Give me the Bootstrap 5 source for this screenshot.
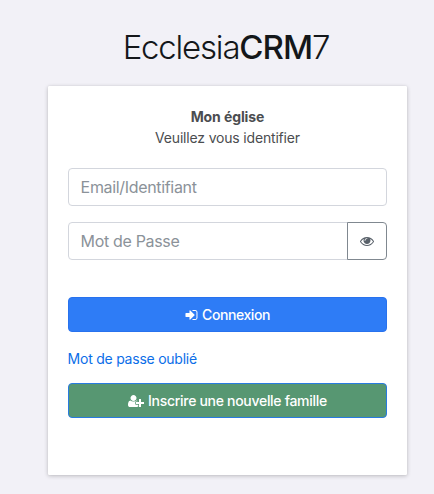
<!DOCTYPE html>
<html lang="fr">
<head>
<meta charset="utf-8">
<meta name="viewport" content="width=device-width, initial-scale=1">
<title>EcclesiaCRM7</title>
<link href="https://cdn.jsdelivr.net/npm/bootstrap@5.3.0/dist/css/bootstrap.min.css" rel="stylesheet">
<style>
body { background: #f2f1f7; font-family: Inter, "Liberation Sans", sans-serif; font-size: 14px; min-height: 494px; overflow: hidden; }
.login-box { width: 359.8px; margin-left: 47.6px; padding-top: 27px; }
.login-logo { font-size: 33px; line-height: 41px; font-weight: 300; color: #14171a; height: 59px; letter-spacing: -1.2px; padding-right: 3px; white-space: nowrap; }
.login-logo b { font-weight: 450; letter-spacing: -1px; }
.login-card { height: 389px; padding: 20px; border: 0; border-radius: 1px; box-shadow: 0 0 1px rgba(0,0,0,.13), 0 1px 4px rgba(0,0,0,.22); }
.login-msg { line-height: 21px; color: #4b4d50; margin-bottom: 20px; letter-spacing: -.18px; }
.login-msg b { font-weight: 650; letter-spacing: -.1px; }
.form-control { height: 38px; border-color: #d3d6dd; border-radius: 4px; font-size: 16px; letter-spacing: -.33px; }
.form-control::placeholder { color: #8b9299; opacity: 1; }
.eye-btn { width: 40px; padding: 0; border-color: #808890; border-radius: 4px; color: #59616a; }
.actions { padding-top: 37px; }
.wide-btn { height: 35px; padding: 0; font-size: 14px; font-weight: 500; letter-spacing: -.3px; color: #fff; border: 1px solid #2872ee; border-radius: 4px; background: #2e7cf6; }
.wide-btn.connect { letter-spacing: -.42px; }
.wide-btn.family { background: #579772; border-color: #287be0; }
.forgot { color: #0b6ee8; letter-spacing: -.24px; line-height: 21px; margin: 16px 0 14px; }
svg { fill: currentColor; flex: none; }
</style>
</head>
<body>
<main class="login-box">
  <h1 class="login-logo text-center mb-0">Ecclesia<b>CRM</b>7</h1>
  <div class="card login-card">
    <div class="login-msg text-center"><b>Mon église</b><br>Veuillez vous identifier</div>
    <form>
      <input type="text" class="form-control mb-3" placeholder="Email/Identifiant">
      <div class="input-group">
        <input type="password" class="form-control" placeholder="Mot de Passe">
        <button type="button" class="btn eye-btn d-flex align-items-center justify-content-center" aria-label="Afficher">
          <svg width="14" height="14" viewBox="0 0 1792 1792"><path d="M1664 960q-152-236-381-353 61 104 61 225 0 185-131.500 316.500t-316.500 131.500-316.500-131.500-131.500-316.500q0-121 61-225-229 117-381 353 133 205 333.500 326.500t434.500 121.500 434.500-121.500 333.500-326.500zm-720-384q0-20-14-34t-34-14q-125 0-214.500 89.500t-89.500 214.500q0 20 14 34t34 14 34-14 14-34q0-86 61-147t147-61q20 0 34-14t14-34zm848 384q0 34-20 69-140 230-376.500 368.500t-499.500 138.500-499.500-139-376.500-368q-20-35-20-69t20-69q140-229 376.500-368t499.500-139 499.500 139 376.500 368q20 35 20 69z"/></svg>
        </button>
      </div>
      <div class="actions d-flex flex-column">
        <button type="button" class="btn wide-btn connect w-100 d-flex align-items-center justify-content-center gap-1">
          <svg width="13" height="14" viewBox="100 0 1600 1792"><path d="M1312 896q0 26-19 45l-544 544q-19 19-45 19t-45-19-19-45v-288h-448q-26 0-45-19t-19-45v-384q0-26 19-45t45-19h448v-288q0-26 19-45t45-19 45 19l544 544q19 19 19 45zm352-352v704q0 119-84.500 203.500t-203.500 84.500h-320q-13 0-22.500-9.500t-9.500-22.500q0-4-1-20t-.5-26.500 3-23.500 10-19.500 20.500-6.500h320q66 0 113-47t47-113v-704q0-66-47-113t-113-47h-312l-11.500-1-11.500-3-8-5.500-7-9-2-13.500q0-4-1-20t-.5-26.500 3-23.500 10-19.500 20.500-6.500h320q119 0 203.500 84.500t84.500 203.500z"/></svg>
          <span>Connexion</span>
        </button>
        <a href="#" class="forgot text-decoration-none">Mot de passe oublié</a>
        <button type="button" class="btn wide-btn family w-100 d-flex align-items-center justify-content-center gap-1">
          <svg width="16" height="14" viewBox="0 0 2048 1792"><path d="M704 896q-159 0-271.500-112.500T320 512t112.500-271.500T704 128t271.500 112.500T1088 512 975.500 783.500 704 896zm960 128h352q13 0 22.500 9.500t9.500 22.500v192q0 13-9.500 22.500t-22.500 9.500h-352v352q0 13-9.500 22.500t-22.500 9.500h-192q-13 0-22.500-9.500t-9.500-22.500v-352h-352q-13 0-22.500-9.500t-9.500-22.500v-192q0-13 9.500-22.500t22.500-9.500h352V672q0-13 9.500-22.500t22.500-9.500h192q13 0 22.500 9.500t9.500 22.500v352zm-736 224q0 52 38 90t90 38h256v238q-68 50-171 50H267q-121 0-194-69T0 1405q0-53 3.500-103.500t14-109T44 1084t43-97.500 62-81 85.500-53.500T346 832q19 0 39 17 79 61 154.500 91.500T704 971t164.500-30.500T1023 849q20-17 39-17 132 0 217 96h-223q-52 0-90 38t-38 90v192z"/></svg>
          <span>Inscrire une nouvelle famille</span>
        </button>
      </div>
    </form>
  </div>
</main>
<script src="https://cdn.jsdelivr.net/npm/bootstrap@5.3.0/dist/js/bootstrap.bundle.min.js"></script>
</body>
</html>
